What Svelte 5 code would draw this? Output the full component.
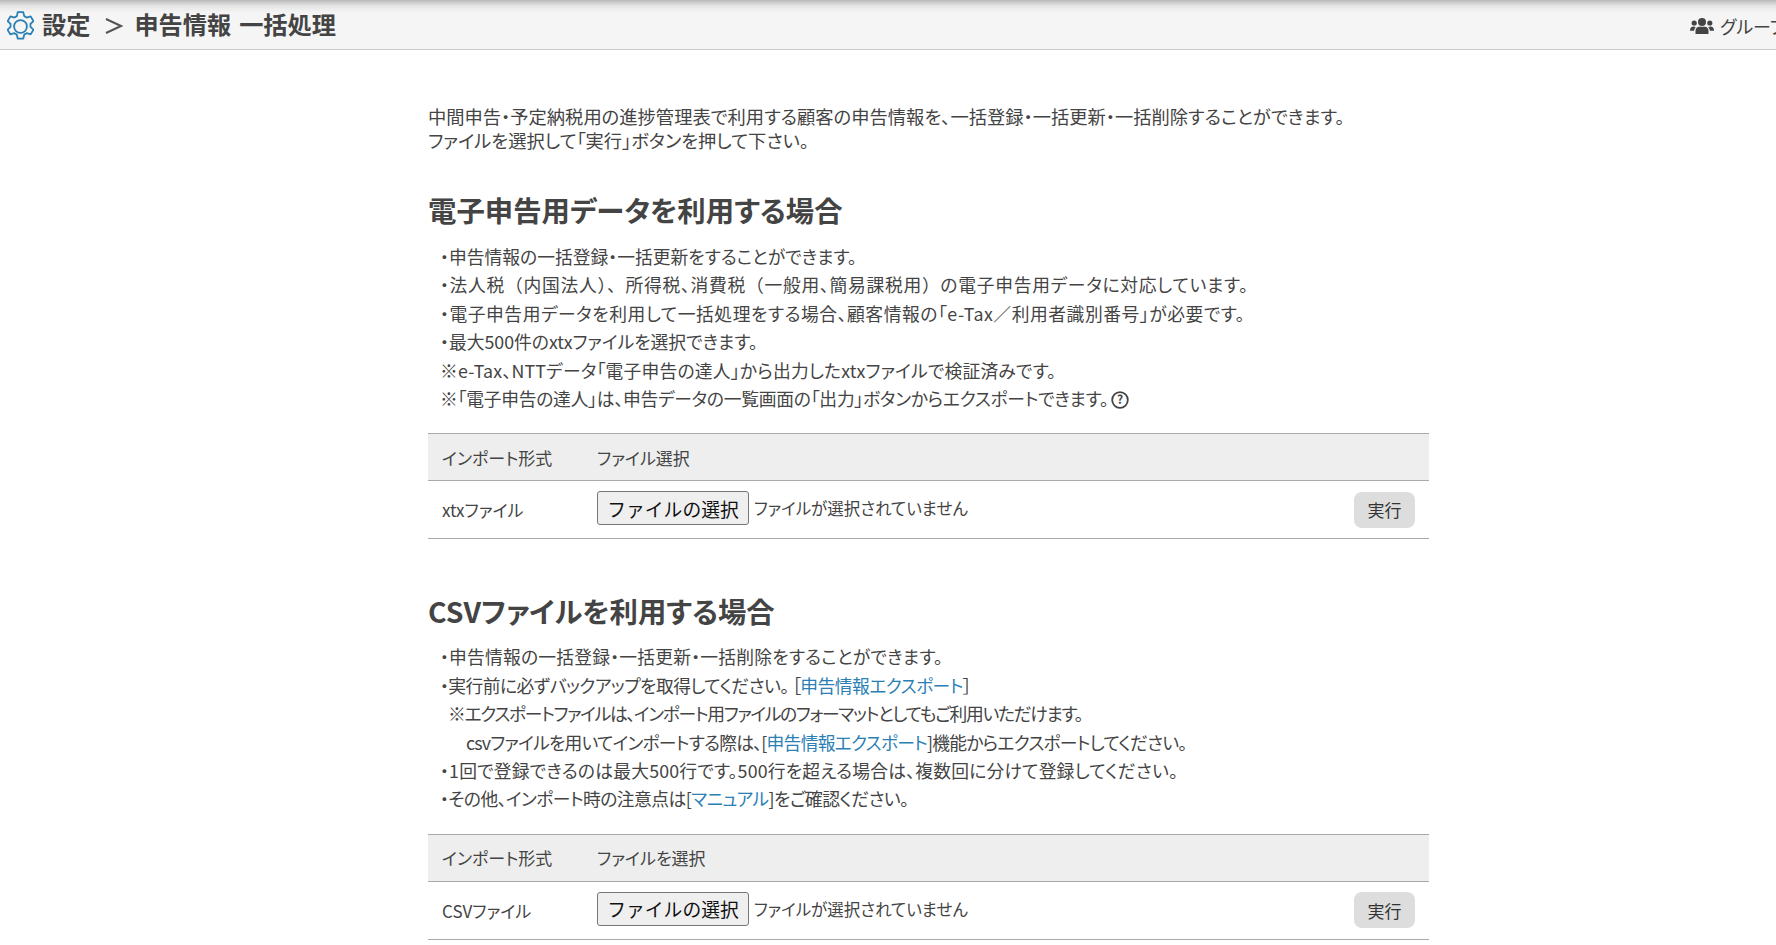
<script>
	const firstNotes = [
		['', '・申告情報の一括登録・一括更新をすることができます。'],
		['ls-wider', '・法人税<span class="wide">（内国法人）、</span>所得税、消費税<span class="wide">（</span>一般用、簡易課税用<span class="wide">）</span>の電子申告用データに対応しています。'],
		['ls-wide', '・電子申告用データを利用して一括処理をする場合、顧客情報の「e-Tax／利用者識別番号」が必要です。'],
		['', '・最大500件のxtxファイルを選択できます。'],
		['ls-plus', '※e-Tax、NTTデータ「電子申告の達人」から出力したxtxファイルで検証済みです。']
	];
</script>

{#snippet importTable(fileHead, label)}
	<div class="import-table">
		<div class="row head">
			<div class="format">インポート形式</div>
			<div>{fileHead}</div>
		</div>
		<div class="row body">
			<div class="format">{label}</div>
			<div class="picker">
				<button class="file-btn" type="button">ファイルの選択</button>
				<span>ファイルが選択されていません</span>
			</div>
			<button class="run-btn" type="button">実行</button>
		</div>
	</div>
{/snippet}

<header class="topbar">
	<svg class="gear" viewBox="1.500 0.500 25 29" width="27" height="31" fill="none" stroke="#2b7fb5" stroke-width="1.700" stroke-linejoin="round">
		<path d="M11.4 1.6h5.2l.9 3.7 2.3 1.300 3.700-1.100 2.600 4.500-2.800 2.600v2.700l2.800 2.600-2.600 4.500-3.700-1.100-2.300 1.300-.9 3.700h-5.200l-.9-3.700-2.300-1.300-3.700 1.100-2.600-4.500 2.800-2.600v-2.700L2 10l2.600-4.500 3.700 1.100 2.300-1.300z" />
		<circle cx="14" cy="15" r="6" />
	</svg>
	<h1 class="crumbs">
		<span>設定</span>
		<svg class="chevron" viewBox="0 0 18 18" width="18" height="18" fill="none" stroke="#555" stroke-width="2"><path d="M1 2l15 7-15 7" /></svg>
		<span>申告情報</span>
		<span class="task">一括処理</span>
	</h1>
	<div class="group">
		<svg viewBox="0 0 24 18" width="24" height="18" fill="#444">
			<circle cx="12" cy="5" r="4" />
			<circle cx="4.2" cy="6" r="2.6" />
			<circle cx="19.8" cy="6" r="2.6" />
			<path d="M5.500 17v-3.200C5.500 11 7.500 9.800 9 9.800h6c1.500 0 3.500 1.200 3.500 4V17z" />
			<path d="M0 13.500C0 11 1.500 9.600 3.500 9.600c.9 0 1.600.3 2.200.8-1 .9-1.600 2.100-1.600 3.400H0zM24 13.500c0-2.500-1.500-3.900-3.500-3.900-.9 0-1.600.3-2.200.8 1 .9 1.600 2.100 1.600 3.400H24z" />
		</svg>
		<span>グループ</span>
	</div>
</header>

<main class="page">
	<p class="intro">
		中間申告・予定納税用の進捗管理表で利用する顧客の申告情報を、一括登録・一括更新・一括削除することができます。<br />
		ファイルを選択して「実行」ボタンを押して下さい。
	</p>

	<section class="first">
		<h2>電子申告用データを利用する場合</h2>
		<ul class="notes">
			{#each firstNotes as [cls, note]}
				<li class={cls}>{@html note}</li>
			{/each}
			<li class="ls-tight">
				※「電子申告の達人」は、申告データの一覧画面の「出力」ボタンからエクスポートできます。<svg class="help" viewBox="0 0 18 18" width="18" height="18"><circle cx="9" cy="9" r="7.8" fill="none" stroke="#444" stroke-width="1.8" /><text x="9" y="13.200" text-anchor="middle" font-size="12" font-weight="700" fill="#444">?</text></svg>
			</li>
		</ul>
		{@render importTable('ファイル選択', 'xtxファイル')}
	</section>

	<section class="second">
		<h2>CSVファイルを利用する場合</h2>
		<ul class="notes">
			<li class="ls-hair">・申告情報の一括登録・一括更新・一括削除をすることができます。</li>
			<li class="ls-narrow">・実行前に必ずバックアップを取得してください。 ［<a href="#export">申告情報エクスポート</a>］</li>
			<li class="sub ls-tightest">※エクスポートファイルは、インポート用ファイルのフォーマットとしてもご利用いただけます。</li>
			<li class="sub2 ls-tighter">csvファイルを用いてインポートする際は、[<a href="#export">申告情報エクスポート</a>]機能からエクスポートしてください。</li>
			<li class="ls-hair">・1回で登録できるのは最大500行です。500行を超える場合は、複数回に分けて登録してください。</li>
			<li class="ls-narrow">・その他、インポート時の注意点は[<a href="#manual">マニュアル</a>]をご確認ください。</li>
		</ul>
		{@render importTable('ファイルを選択', 'CSVファイル')}
	</section>
</main>

<style>
	:global(body) {
		overflow: hidden;
		height: 945px;
		background: #fff;
	}

	.topbar {
		display: flex;
		align-items: center;
		height: 50px;
		padding: 3px 0 0 7px;
		box-sizing: border-box;
		border-bottom: 1px solid #ccc;
		background: linear-gradient(#b9b9b9 0, #e6e6e6 6px, #f5f5f5 13px);
		font-family: "Noto Sans CJK JP", sans-serif;
		color: #444;
	}

	.crumbs {
		display: flex;
		align-items: center;
		gap: 12px;
		margin: -3px 0 0 8px;
		font-size: 24.2px;
		font-weight: 700;
		line-height: 1;
		flex: 1;
		white-space: nowrap;
	}

	.task {
		margin-left: -4px;
	}

	.chevron {
		flex-shrink: 0;
		margin: 3px -1px 0 3px;
	}

	.group {
		display: flex;
		align-items: center;
		gap: 6px;
		width: 86px;
		overflow: hidden;
		white-space: nowrap;
		font-size: 18px;
		flex-shrink: 0;
		font-feature-settings: "palt";
	}

	.group svg {
		flex-shrink: 0;
	}

	.page {
		width: 1001px;
		margin: 0 0 0 428px;
		padding-top: 54px;
		font-family: "Noto Sans CJK JP", sans-serif;
		font-size: 17px;
		color: #444;
		font-feature-settings: "palt";
	}

	.intro {
		margin: 0;
		font-size: 18.3px;
		line-height: 24px;
	}

	h2 {
		margin: 0;
		font-size: 28.4px;
		font-weight: 700;
		line-height: 40px;
	}

	.first {
		margin-top: 38px;
	}

	.second {
		margin-top: 52px;
	}

	.notes {
		list-style: none;
		margin: 12px 0 21px;
		padding: 0 0 0 12px;
		font-size: 17.8px;
		line-height: 28.4px;
	}

	.second .notes {
		margin-top: 11px;
	}

	.notes :global(.wide) {
		font-feature-settings: normal;
	}

	.ls-wider {
		letter-spacing: 0.7px;
	}

	.ls-wide {
		letter-spacing: 0.53px;
	}

	.ls-plus {
		letter-spacing: 0.2px;
	}

	.ls-hair {
		letter-spacing: 0.2px;
	}

	.ls-tight {
		letter-spacing: -0.26px;
	}

	.ls-narrow {
		letter-spacing: -0.55px;
	}

	.ls-tighter {
		letter-spacing: -0.76px;
	}

	.ls-tightest {
		letter-spacing: -1.3px;
	}

	.sub {
		padding-left: 8px;
	}

	.sub2 {
		padding-left: 26px;
	}

	a {
		color: #2b7fb5;
		text-decoration: none;
	}

	.help {
		vertical-align: -3px;
		margin-left: 3px;
	}

	.import-table {
		border-top: 1px solid #aaa;
		border-bottom: 1px solid #aaa;
	}

	.row {
		display: flex;
		align-items: center;
		padding: 0 14px;
	}

	.head {
		height: 46px;
		background: #eee;
		border-bottom: 1px solid #aaa;
	}

	.body {
		height: 57px;
	}

	.format {
		width: 155px;
		flex-shrink: 0;
	}

	.picker {
		display: flex;
		align-items: center;
		gap: 5px;
		flex: 1;
		font-size: 16.5px;
		margin-top: -3px;
	}

	.file-btn {
		width: 152px;
		height: 34px;
		padding: 0;
		border: 1px solid #767676;
		border-radius: 3px;
		background: #efefef;
		color: #111;
		font: 18.8px "Noto Sans CJK JP", sans-serif;
		white-space: nowrap;
	}

	.run-btn {
		width: 61px;
		height: 36px;
		padding: 0;
		border: 0;
		border-radius: 8px;
		background: #ddd;
		color: #333;
		font: 17px "Noto Sans CJK JP", sans-serif;
	}
</style>
